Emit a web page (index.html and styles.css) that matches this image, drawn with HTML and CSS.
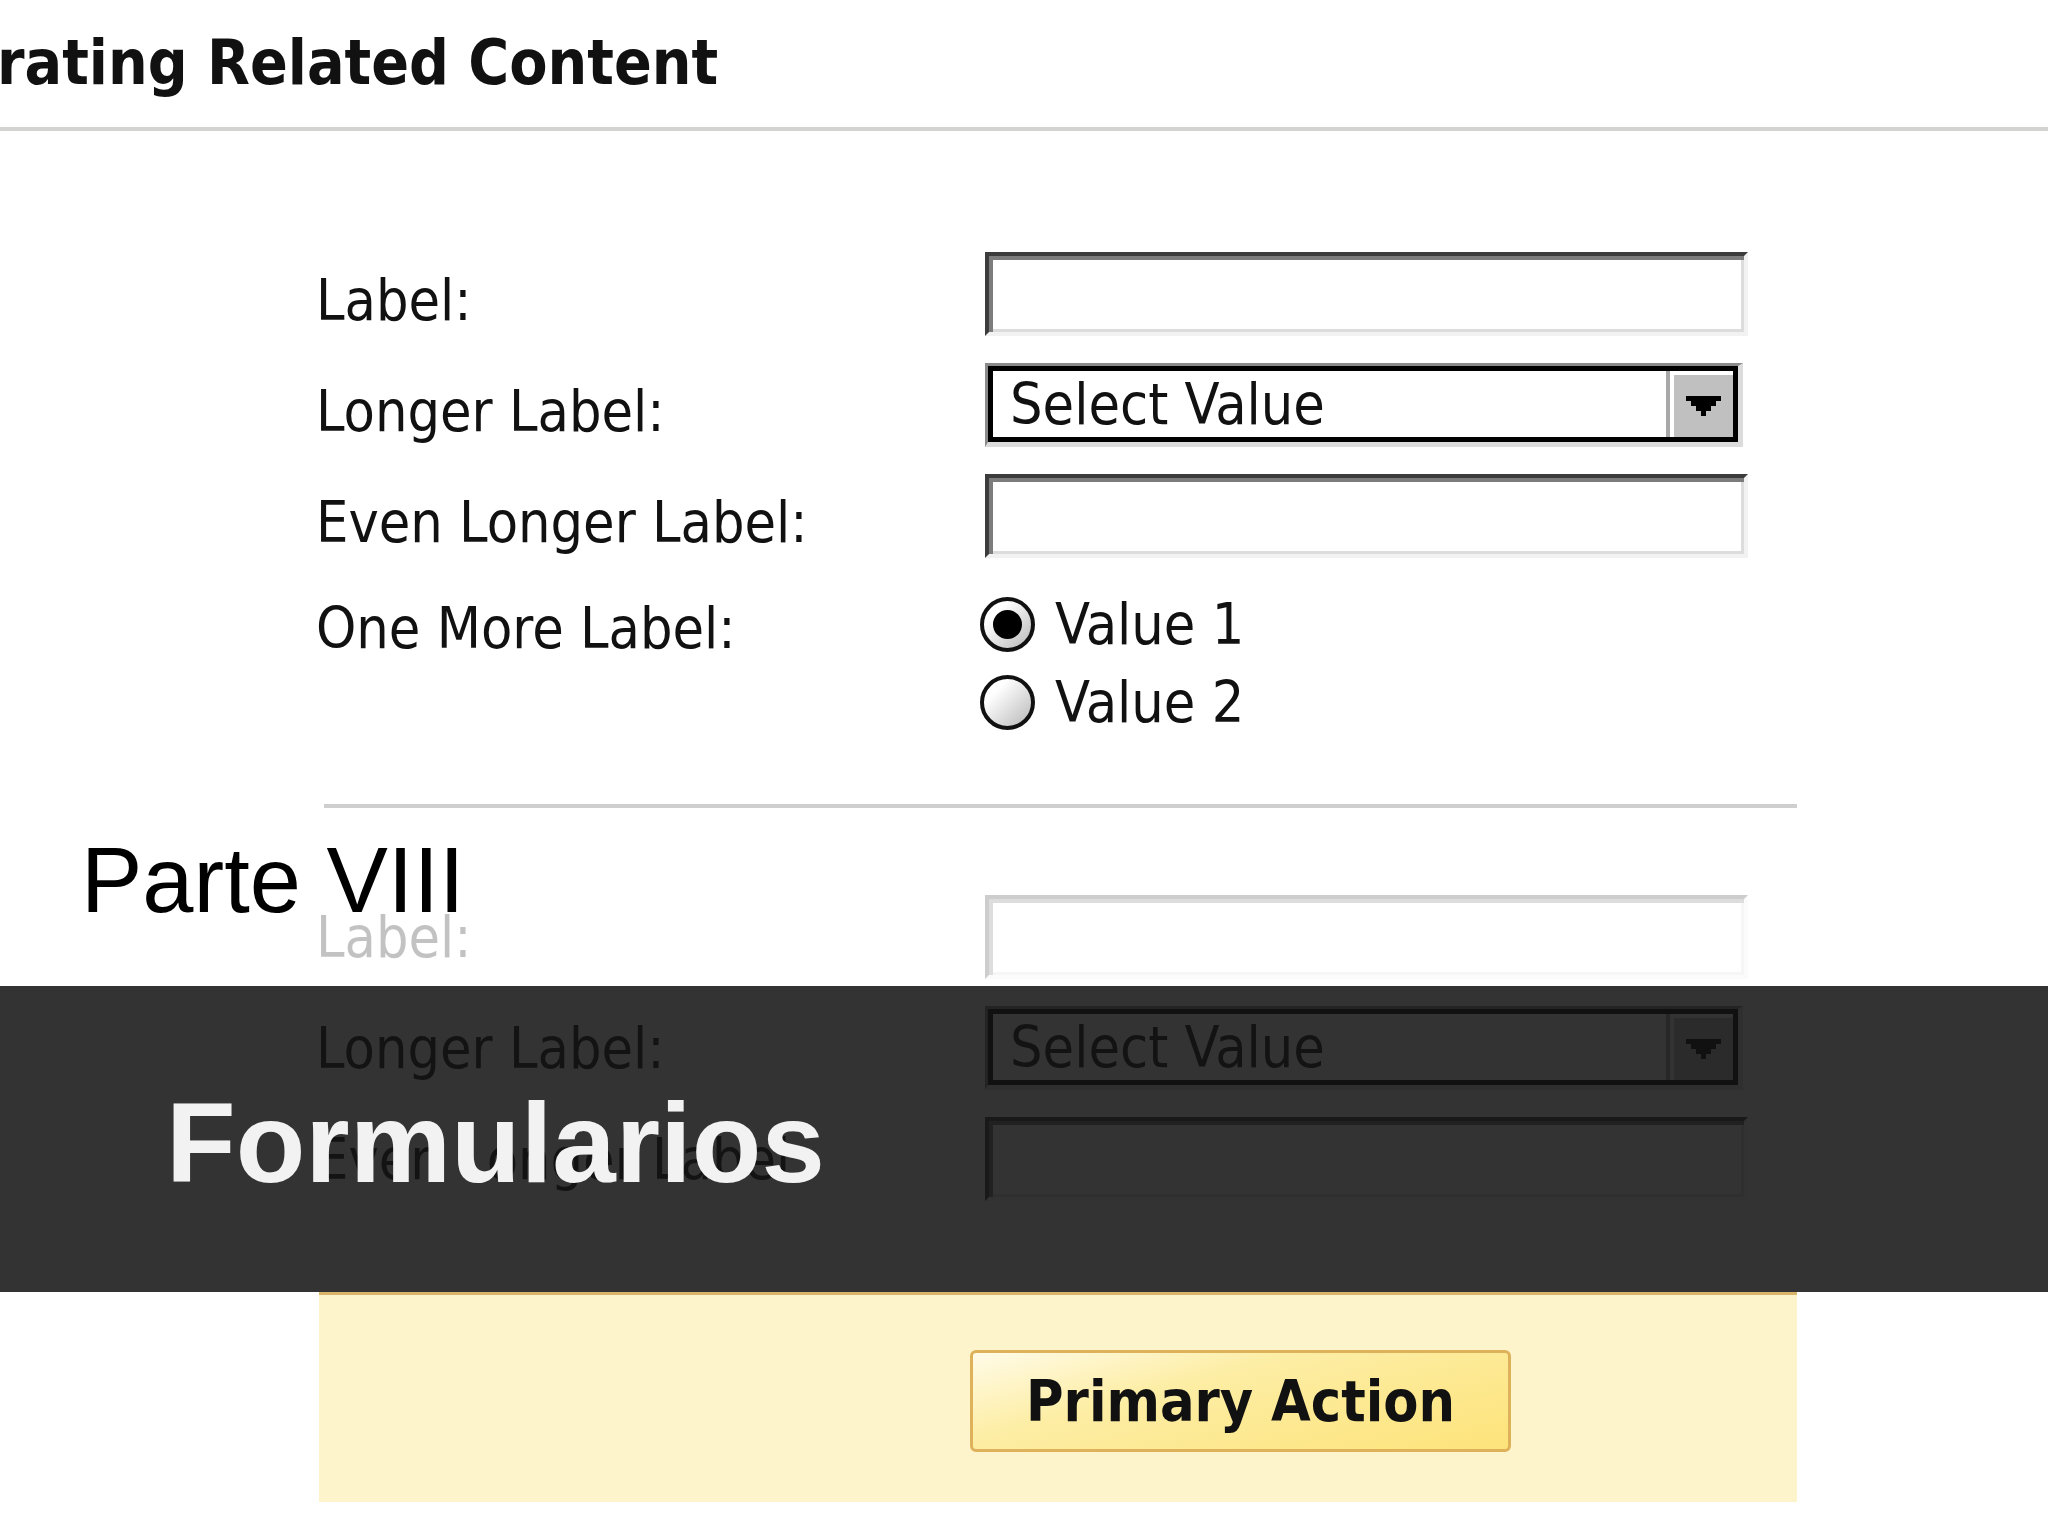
FILE: index.html
```html
<!DOCTYPE html>
<html lang="en">
<head>
    <meta charset="UTF-8">
    <meta name="viewport" content="width=device-width, initial-scale=1.0">
    <title>Parte VIII - Formularios</title>
    <link rel="stylesheet" href="styles.css">
</head>
<body>
    <h1 class="page-title">rating Related Content</h1>
    <div class="title-rule"></div>

    <div class="content">
        <div class="form-grid">
            <label class="field-label">Label:</label>
            <div class="text-box"></div>

            <label class="field-label">Longer Label:</label>
            <div class="select-box">
                <div class="select-inner">
                    <span class="select-value">Select Value</span>
                    <span class="select-arrow">
                        <svg width="35" height="20" viewBox="0 0 7 4" shape-rendering="crispEdges"><path d="M0 0H7V1H6V2H5V3H4V4H3V3H2V2H1V1H0Z" fill="#000"/></svg>
                    </span>
                </div>
            </div>

            <label class="field-label">Even Longer Label:</label>
            <div class="text-box"></div>

            <label class="field-label top">One More Label:</label>
            <div class="radio-group">
                <label class="radio-option"><span class="radio checked"></span>Value 1</label>
                <label class="radio-option"><span class="radio"></span>Value 2</label>
            </div>
        </div>

        <div class="section-rule"></div>

        <div class="form-grid ghost">
            <label class="field-label faded">Label:</label>
            <div class="text-box faded"></div>

            <label class="field-label">Longer Label:</label>
            <div class="select-box">
                <div class="select-inner">
                    <span class="select-value">Select Value</span>
                    <span class="select-arrow">
                        <svg width="35" height="20" viewBox="0 0 7 4" shape-rendering="crispEdges"><path d="M0 0H7V1H6V2H5V3H4V4H3V3H2V2H1V1H0Z" fill="#000"/></svg>
                    </span>
                </div>
            </div>

            <label class="field-label">Even Longer Label:</label>
            <div class="text-box"></div>
        </div>

        <div class="action-bar">
            <button class="primary-btn">Primary Action</button>
        </div>
    </div>

    <!-- slide title laid over the screenshot -->
    <div class="slide-overlay">
        <h2 class="part-title">Parte VIII</h2>
        <div class="band">
            <h2 class="band-title">Formularios</h2>
        </div>
    </div>
</body>
</html>
```

FILE: styles.css
```css
body {
    margin: 0;
    width: 2048px;
    height: 1536px;
    overflow: hidden;
    position: relative;
    background-color: #fff;
    color: #111;
    font-family: "DejaVu Sans Condensed", "DejaVu Sans", sans-serif;
    font-stretch: condensed;
}

.page-title {
    margin: 32px 0 33px -3px;
    font-size: 62px;
    line-height: 1;
    font-weight: bold;
    white-space: nowrap;
}

.title-rule {
    height: 4px;
    background-color: #d3d3cf;
}

.content {
    padding: 121px 0 0 316px;
}

.form-grid {
    display: grid;
    grid-template-columns: 669px 763px;
    row-gap: 27px;
    align-items: center;
}

.field-label {
    font-size: 57px;
    line-height: 1;
    margin-top: 12px;
    white-space: nowrap;
}

.field-label.top {
    align-self: start;
    line-height: 78px;
    margin-top: 4px;
}

.ghost .field-label {
    margin-top: 0;
}

.text-box {
    height: 84px;
    box-sizing: border-box;
    background-color: #fff;
    border-top: 4px solid #3c3c3c;
    border-left: 4px solid #3c3c3c;
    border-right: 4px solid #f2f2f2;
    border-bottom: 4px solid #f2f2f2;
    box-shadow: inset 4px 4px 0 #7c7c7c, inset -3px -3px 0 #dcdcdc;
}

.select-box {
    width: 758px;
    height: 84px;
    box-sizing: border-box;
    border-top: 3px solid #8a8a8a;
    border-left: 3px solid #8a8a8a;
    border-right: 5px solid #dcdcdc;
    border-bottom: 5px solid #dcdcdc;
}

.select-inner {
    height: 100%;
    box-sizing: border-box;
    border: 5px solid #000;
    background-color: #fff;
    display: flex;
    align-items: center;
}

.select-value {
    flex: 1;
    padding-left: 17px;
    font-size: 57px;
    line-height: 1;
}

.select-arrow {
    flex: none;
    width: 59px;
    align-self: stretch;
    background-color: #c0c0c0;
    border-top: 4px solid #fff;
    border-left: 4px solid #fff;
    box-shadow: -4px 0 0 #a8a8a8;
    display: flex;
    align-items: center;
    justify-content: center;
}

.radio-group {
    display: flex;
    flex-direction: column;
    margin-left: -5px;
}

.radio-option {
    display: flex;
    align-items: center;
    gap: 20px;
    height: 78px;
    font-size: 57px;
}

.radio {
    position: relative;
    width: 55px;
    height: 55px;
    box-sizing: border-box;
    border: 4px solid #111;
    border-radius: 50%;
    background: linear-gradient(135deg, #fff 25%, #b8b8b8 100%);
}

.radio.checked::after {
    content: "";
    position: absolute;
    inset: 9px;
    border-radius: 50%;
    background-color: #000;
}

.section-rule {
    margin: 63px 0 0 8px;
    width: 1473px;
    height: 4px;
    background-color: #cfcfcf;
}

.form-grid.ghost {
    margin-top: 87px;
}

.faded {
    opacity: 0.25;
}

.action-bar {
    margin: 91px 0 0 3px;
    width: 1478px;
    height: 210px;
    box-sizing: border-box;
    border-top: 3px solid #d9b46a;
    background-color: #fdf4cb;
    padding: 55px 0 0 651px;
}

.primary-btn {
    width: 541px;
    height: 102px;
    box-sizing: border-box;
    border: 3px solid #deb25a;
    border-radius: 6px;
    background: linear-gradient(165deg, #fffbe8 0%, #fdeea6 35%, #fde37a 100%);
    color: #111;
    font-family: "DejaVu Sans Condensed", "DejaVu Sans", sans-serif;
    font-stretch: condensed;
    font-size: 57px;
    font-weight: bold;
    display: flex;
    align-items: center;
    justify-content: center;
    padding: 0;
}

.slide-overlay {
    position: absolute;
    top: 834px;
    left: 0;
    right: 0;
    font-family: "Liberation Sans", Arial, sans-serif;
}

.part-title {
    margin: 0 0 0 81px;
    font-size: 92px;
    line-height: 1;
    font-weight: normal;
    color: #000;
}

.band {
    margin-top: 60px;
    height: 306px;
    box-sizing: border-box;
    padding: 100px 0 0 166px;
    background-color: rgba(20, 20, 20, 0.867);
}

.band-title {
    margin: 0;
    font-size: 114px;
    line-height: 1;
    font-weight: bold;
    color: #f2f2f2;
}
```
